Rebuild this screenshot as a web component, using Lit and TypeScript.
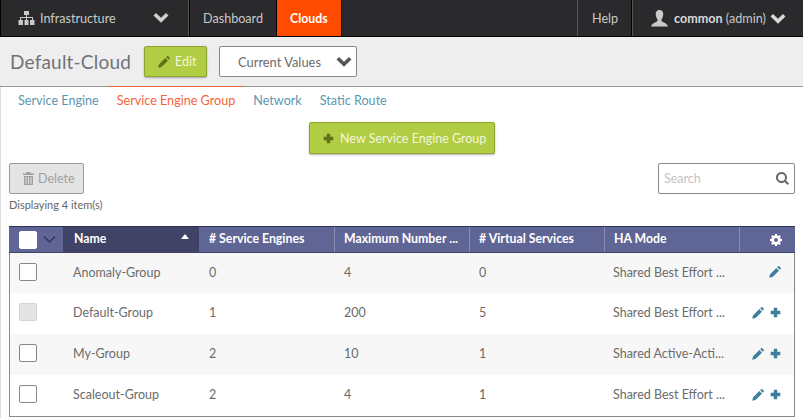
import { LitElement, html, css, svg } from 'lit';
import { customElement } from 'lit/decorators.js';

const chevron = svg`<path d="M.5 4.500 3 2 8 6.800 13 2 15.500 4.500 8 11.800Z"/>`;
const pencil = svg`<path d="M1.200 11.300 9.800 2.700 13.300 6.200 4.700 14.800 .4 15.600ZM10.900 1.600 11.900.6C12.500 0 13.300 0 13.900.6L15.400 2.100C16 2.700 16 3.500 15.400 4.100L14.400 5.100Z"/>`;
const plus = svg`<path d="M5.500 1H10.500V5.500H15V10.500H10.500V15H5.500V10.500H1V5.500H5.500Z"/>`;

const rows = [
  { name: 'Anomaly-Group', engines: '0', max: '4', vs: '0', ha: 'Shared Best Effort ...', add: false, off: false },
  { name: 'Default-Group', engines: '1', max: '200', vs: '5', ha: 'Shared Best Effort ...', add: true, off: true },
  { name: 'My-Group', engines: '2', max: '10', vs: '1', ha: 'Shared Active-Acti...', add: true, off: false },
  { name: 'Scaleout-Group', engines: '2', max: '4', vs: '1', ha: 'Shared Best Effort ...', add: true, off: false },
];

@customElement('app-root')
export class AppRoot extends LitElement {
  static styles = css`
    :host {
      display: block;
      width: 803px;
      height: 418px;
      overflow: hidden;
      background: #fff;
      font-family: Lato, "Open Sans", sans-serif;
      font-size: 12.5px;
      color: #6b6b6b;
    }
    svg { display: block; fill: currentColor; flex: none; }

    .top {
      display: flex;
      height: 36px;
      background: #2a2a2c;
      border-bottom: 1px solid #000;
      border-left: 1px solid #000;
      color: #c9c9c9;
      font-size: 12.6px;
    }
    .top > div { display: flex; align-items: center; }
    .infra { width: 188px; padding-left: 17px; box-sizing: border-box; border-right: 1px solid #555; gap: 5px; }
    .infra svg:last-child { margin-left: 32px; color: #d0d0d0; }
    .nav { border-left: 1px solid #000; }
    .dash { width: 87px; padding-left: 13px; box-sizing: border-box; }
    .clouds { width: 66px; padding-left: 13px; box-sizing: border-box; background: #ff4b00; color: #fff; font-weight: 700; font-size: 12.3px; border-right: 1px solid #000; }
    .spacer { flex: 1; }
    .help { width: 55px; box-sizing: border-box; padding-left: 14px; border-left: 1px solid #555; border-right: 1px solid #000; }
    .user { width: 171px; box-sizing: border-box; padding-left: 17px; border-left: 1px solid #555; gap: 5px; }
    .user b { color: #d8d8d8; }
    .user svg:last-child { margin-left: -1px; color: #d8d8d8; }

    .sub {
      display: flex;
      align-items: center;
      height: 49px;
      background: #eee;
      border-bottom: 1px solid #999;
      padding-left: 10px;
    }
    h1 { margin: 0; font-size: 19px; font-weight: 400; color: #6f7378; width: 134px; letter-spacing: .2px; }
    .btn {
      display: flex;
      align-items: center;
      box-sizing: border-box;
      background: #b0cd44;
      border: 1px solid #8ea52f;
      border-radius: 2px;
      color: #f3f6dd;
      box-shadow: 0 1px 2px rgba(0,0,0,.3);
    }
    .edit { width: 63px; height: 31px; gap: 5px; padding-left: 13px; }
    .edit svg, .new svg { color: #5f7316; }
    .select {
      display: flex;
      align-items: center;
      box-sizing: border-box;
      width: 138px;
      height: 31px;
      margin-left: 12px;
      padding-left: 18px;
      gap: 15px;
      background: #fff;
      border: 1px solid #888;
      border-radius: 2px;
      font-size: 12.9px;
    }
    .select svg { color: #555; }

    main { border-left: 1px solid #ddd; height: 331px; }
    .tabs { display: flex; height: 29px; padding-left: 8px; font-size: 12.6px; }
    .tab { padding: 6px 9px 0; color: #5c97b0; border-top: 1px solid transparent; margin-top: -1px; }
    .tab.on { color: #f5623a; border-top-color: #e8633a; }
    .new-row { display: flex; justify-content: center; padding-top: 6px; height: 32px; }
    .new { width: 186px; height: 32px; gap: 6px; padding-left: 13px; }
    .tools { display: flex; justify-content: space-between; padding: 9px 8px 0; height: 32px; }
    .delete {
      display: flex;
      align-items: center;
      box-sizing: border-box;
      gap: 4px;
      width: 75px;
      height: 31px;
      padding-left: 13px;
      background: #e4e4e4;
      border: 1px solid #999;
      border-radius: 2px;
      color: #a0a0a0;
    }
    .search {
      display: flex;
      align-items: center;
      justify-content: space-between;
      box-sizing: border-box;
      width: 137px;
      height: 31px;
      padding: 0 5px 1px;
      border: 1px solid #888;
      border-radius: 2px;
      color: #c4c4c4;
    }
    .search svg { color: #666; }
    .count { font-size: 11px; padding: 3px 0 0 8px; height: 28px; color: #666; }

    .table { margin-left: 8px; width: 786px; box-sizing: border-box; border: 1px solid #888; border-top: 0; }
    .head, .row { display: grid; align-items: center; }
    .head {
      grid-template-columns: 54px 136px 135px 135px 135px 135px 1fr;
      height: 27px;
      background: #5f6594;
      color: #fff;
      font-weight: 700;
      font-size: 12.3px;
      border-top: 1px solid #2f3358;
      border-bottom: 1px solid #3f4368;
      box-sizing: border-box;
      margin: 0 -1px;
    }
    .row { grid-template-columns: 53px 136px 135px 135px 135px 135px 1fr; }
    .head > div { display: flex; align-items: center; height: 100%; box-sizing: border-box; padding: 0 0 2px 10px; }
    .head > div + div + div + div { border-left: 1px solid #888db0; padding-left: 9px; }
    .head .pick { gap: 6px; color: #30345a; padding-bottom: 0; }
    .head .name { background: #414366; justify-content: space-between; padding: 0 10px 2px 11px; }
    .head .name i { width: 0; height: 0; border: 4px solid transparent; border-top: 0; border-bottom: 5px solid #fff; margin-top: -4px; }
    .head > .gear { justify-content: flex-end; padding: 0 13px 0 0; }
    .box { width: 18px; height: 18px; box-sizing: border-box; border: 1px solid #888; border-radius: 2px; background: #fff; }
    .head .box { border-color: #fff; }
    .box.off { background: #e4e4e4; border-color: #d4d4d4; }
    .row { height: 41px; }
    .row:nth-child(even) { background: #f7f7f7; }
    .row:nth-child(2) { height: 40px; }
    .row > div { padding: 0 0 2px 10px; white-space: nowrap; }
    .row > .cell-box { padding-left: 9px; }
    .row .box { margin-top: -1px; }
    .row > .ha { padding-left: 9px; }
    .row > .acts { display: flex; justify-content: flex-end; align-items: center; gap: 6px; padding: 0 13px 2px 0; color: #3f7f9e; }
  `;

  render() {
    return html`
      <div class="top">
        <div class="infra">
          <svg width="17" height="14" viewBox="0 0 17 14"><path d="M6 0H11V4H9V6H15V9H16.500V14H12V9H14V7H9V9H10.500V14H6.500V9H8V7H3V9H5V14H.5V9H2V6H8V4H6Z"/></svg>
          <span>Infrastructure</span>
          <svg width="16" height="14" viewBox="0 0 16 14">${chevron}</svg>
        </div>
        <div class="nav dash">Dashboard</div>
        <div class="nav clouds">Clouds</div>
        <div class="spacer"></div>
        <div class="help">Help</div>
        <div class="user">
          <svg width="19" height="17" viewBox="0 0 19 17"><path d="M9.500 0C12.500 0 13.500 2.500 13.200 5 13 7 12 8.500 11.500 9.500V11C13 12.500 17 13 18 16.500H1C2 13 6 12.500 7.500 11V9.500C7 8.500 6 7 5.800 5 5.500 2.500 6.500 0 9.500 0Z"/></svg>
          <span><b>common</b> (admin)</span>
          <svg width="16" height="13" viewBox="0 0 16 13">${chevron}</svg>
        </div>
      </div>

      <div class="sub">
        <h1>Default-Cloud</h1>
        <div class="btn edit">
          <svg width="12" height="12" viewBox="0 0 16 16">${pencil}</svg>
          <span>Edit</span>
        </div>
        <div class="select">
          <span>Current Values</span>
          <svg width="16" height="13" viewBox="0 0 16 13">${chevron}</svg>
        </div>
      </div>

      <main>
        <div class="tabs">
          <div class="tab">Service Engine</div>
          <div class="tab on">Service Engine Group</div>
          <div class="tab">Network</div>
          <div class="tab">Static Route</div>
        </div>
        <div class="new-row">
          <div class="btn new">
            <svg width="11" height="11" viewBox="0 0 16 16">${plus}</svg>
            <span>New Service Engine Group</span>
          </div>
        </div>
        <div class="tools">
          <div class="delete">
            <svg width="11" height="13" viewBox="0 0 11 13"><path d="M3.500 0H7.500L8 1.500H11V3H0V1.500H3ZM1 4H10V13H1ZM2.500 5V12H3.500V5ZM5 5V12H6V5ZM7.500 5V12H8.500V5Z" fill-rule="evenodd"/></svg>
            <span>Delete</span>
          </div>
          <div class="search">
            <span>Search</span>
            <svg width="13" height="13" viewBox="0 0 13 13"><path d="M5.500 0A5.500 5.500 0 0 1 10 8.600L13 11.600 11.600 13 8.600 10A5.500 5.500 0 1 1 5.500 0ZM5.500 2A3.500 3.500 0 1 0 5.500 9 3.500 3.500 0 0 0 5.500 2Z" fill-rule="evenodd"/></svg>
          </div>
        </div>
        <div class="count">Displaying 4 item(s)</div>
        <div class="table">
          <div class="head">
            <div class="pick">
              <div class="box"></div>
              <svg width="13" height="9" viewBox="0 0 13 9"><path d="M1 1.500 6.500 7 12 1.500" fill="none" stroke="currentColor" stroke-width="1.500"/></svg>
            </div>
            <div class="name"><span>Name</span><i></i></div>
            <div># Service Engines</div>
            <div>Maximum Number ...</div>
            <div># Virtual Services</div>
            <div>HA Mode</div>
            <div class="gear">
              <svg width="12" height="12" viewBox="0 0 12 12"><path d="M5 0H7L7.300 1.600 8.400 2 9.700 1.100 10.900 2.300 10 3.600 10.400 4.700 12 5V7L10.400 7.300 10 8.400 10.900 9.700 9.700 10.900 8.400 10 7.300 10.400 7 12H5L4.700 10.400 3.600 10 2.300 10.900 1.100 9.700 2 8.400 1.600 7.300 0 7V5L1.600 4.700 2 3.600 1.100 2.300 2.300 1.100 3.600 2 4.700 1.600ZM6 4A2 2 0 1 0 6 8 2 2 0 0 0 6 4Z" fill-rule="evenodd"/></svg>
            </div>
          </div>
          ${rows.map(r => html`
            <div class="row">
              <div class="cell-box"><div class="box ${r.off ? 'off' : ''}"></div></div>
              <div>${r.name}</div>
              <div>${r.engines}</div>
              <div>${r.max}</div>
              <div>${r.vs}</div>
              <div class="ha">${r.ha}</div>
              <div class="acts">
                <svg width="12" height="12" viewBox="0 0 16 16">${pencil}</svg>
                ${r.add ? html`<svg width="11" height="11" viewBox="0 0 16 16">${plus}</svg>` : ''}
              </div>
            </div>
          `)}
        </div>
      </main>
    `;
  }
}
